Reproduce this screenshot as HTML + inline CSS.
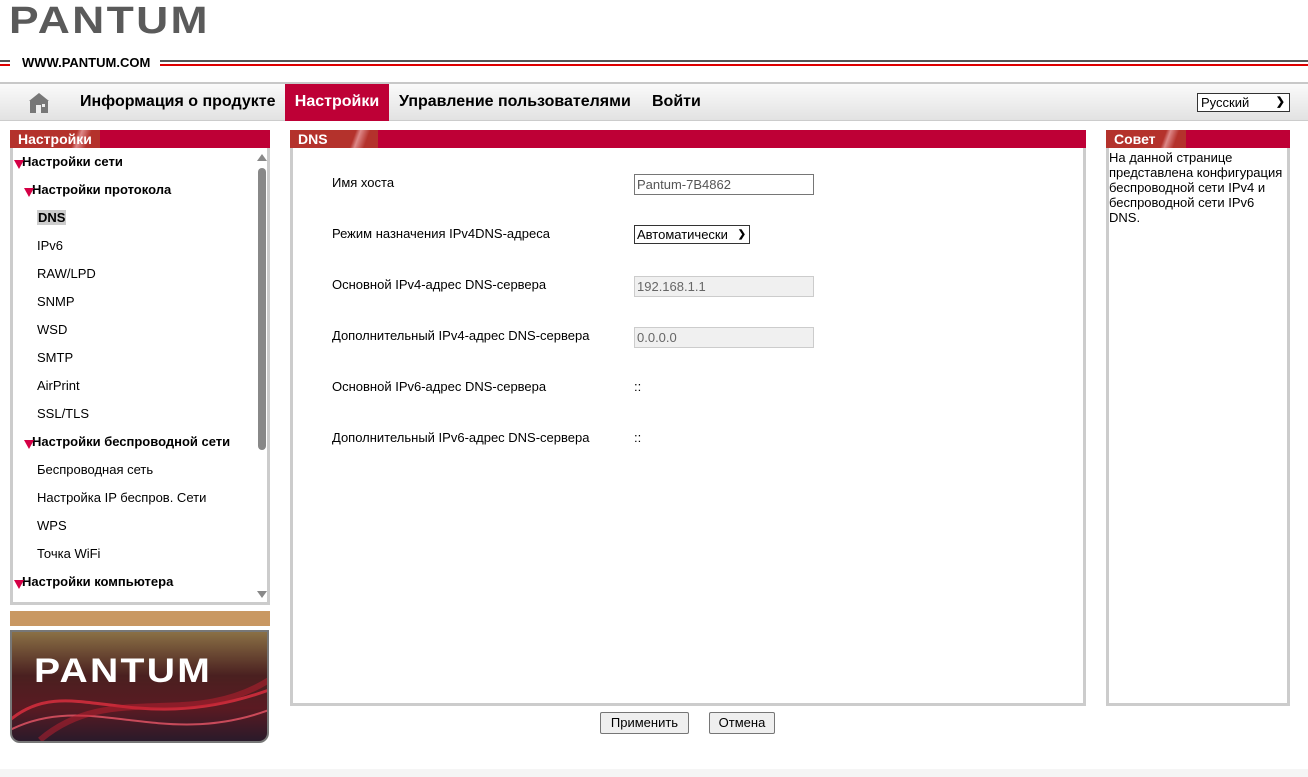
<!DOCTYPE html>
<html><head><meta charset="utf-8"><style>
*{margin:0;padding:0;box-sizing:border-box}
body{width:1308px;height:777px;background:#fff;font-family:"Liberation Sans",Arial,sans-serif;position:relative;overflow:hidden;color:#000}
.abs{position:absolute}
.logo{left:9px;top:1px;font-size:38px;font-weight:bold;color:#5a5a5a;letter-spacing:2px;transform:scaleX(1.17);transform-origin:left;line-height:40px}
.nav{left:0;top:82px;width:1308px;height:39px;border-top:2px solid #c8c8c8;background:linear-gradient(#fafafa,#e2e2e2);border-bottom:1px solid #ccc}
.nav span{position:absolute;top:0;height:37px;line-height:36px;font-size:16px;font-weight:bold}
.hdr{height:18px;background:#be0036;color:#fff;font-weight:bold;font-size:14px;line-height:18px}
.hdr i{display:inline-block;height:18px;padding:0 8px;background:linear-gradient(110deg,#b4322c 70%,#d88 75%,#b4322c 85%);font-style:normal}
.box{border:3px solid #ccc;border-top:none;background:#fff}
.tree div{position:absolute;font-size:13px;white-space:nowrap}
.tree b.t{position:absolute;width:0;height:0;border-left:5px solid transparent;border-right:5px solid transparent;border-top:9px solid #d40045}
.lbl{position:absolute;left:332px;font-size:13px}
.inp{position:absolute;left:634px;width:180px;height:21px;border:1px solid #767676;font-size:13px;color:#555;padding-left:2px;line-height:19px}
.dis{background:#f0f0f0;border-color:#ccc;color:#666}
.btn{position:absolute;top:712px;height:22px;border:1px solid #767676;border-radius:2px;background:#efefef;font-size:13px;text-align:center;line-height:20px}
</style></head><body>
<div class="abs logo">PANTUM</div>
<div class="abs" style="left:0;top:60px;width:10px;height:2px;background:#555"></div>
<div class="abs" style="left:0;top:64px;width:10px;height:2px;background:#d00"></div>
<div class="abs" style="left:160px;top:60px;width:1148px;height:2px;background:#555"></div>
<div class="abs" style="left:160px;top:64px;width:1148px;height:2px;background:#d00"></div>
<div class="abs" style="left:22px;top:55px;font-size:13px;font-weight:bold">WWW.PANTUM.COM</div>
<div class="abs nav">
<svg style="position:absolute;left:28px;top:8px" width="22" height="22" viewBox="0 0 22 22"><path d="M11 1L1 9h20z" fill="#777"/><rect x="2" y="9" width="18" height="12" fill="#777"/><rect x="8" y="13" width="5" height="8" fill="#eee"/><rect x="14" y="12" width="3" height="3" fill="#eee"/></svg>
<span style="left:80px">Информация о продукте</span>
<span style="left:285px;width:104px;background:#be0036;color:#fff;text-align:center">Настройки</span>
<span style="left:399px">Управление пользователями</span>
<span style="left:652px">Войти</span>
<div style="position:absolute;left:1197px;top:9px;width:93px;height:19px;border:1px solid #333;background:#fff;font-size:13px;line-height:17px;padding-left:3px">Русский<span style="position:absolute;left:auto;right:4px;top:0;height:17px;line-height:17px;font-size:11px">&#10095;</span></div>
</div>
<!-- left -->
<div class="abs" style="left:10px;top:130px;width:260px"><div class="hdr"><i>Настройки</i></div>
<div class="box tree" style="height:457px;position:relative">
<div style="left:9px;top:6px;font-weight:bold"><b class="t" style="left:-8px;top:6px"></b>Настройки сети</div>
<div style="left:19px;top:34px;font-weight:bold"><b class="t" style="left:-8px;top:6px"></b>Настройки протокола</div>
<div style="left:24px;top:62px;font-weight:bold;background:#ccc;padding:0 1px">DNS</div>
<div style="left:24px;top:90px">IPv6</div>
<div style="left:24px;top:118px">RAW/LPD</div>
<div style="left:24px;top:146px">SNMP</div>
<div style="left:24px;top:174px">WSD</div>
<div style="left:24px;top:202px">SMTP</div>
<div style="left:24px;top:230px">AirPrint</div>
<div style="left:24px;top:258px">SSL/TLS</div>
<div style="left:19px;top:286px;font-weight:bold"><b class="t" style="left:-8px;top:6px"></b>Настройки беспроводной сети</div>
<div style="left:24px;top:314px">Беспроводная сеть</div>
<div style="left:24px;top:342px">Настройка IP беспров. Сети</div>
<div style="left:24px;top:370px">WPS</div>
<div style="left:24px;top:398px">Точка WiFi</div>
<div style="left:9px;top:426px;font-weight:bold"><b class="t" style="left:-8px;top:6px"></b>Настройки компьютера</div>
<div style="left:244px;top:6px;width:0;height:0;border-left:5px solid transparent;border-right:5px solid transparent;border-bottom:7px solid #888"></div>
<div style="left:245px;top:20px;width:8px;height:282px;background:#888;border-radius:4px"></div>
<div style="left:244px;top:443px;width:0;height:0;border-left:5px solid transparent;border-right:5px solid transparent;border-top:7px solid #888"></div>
</div></div>
<div class="abs" style="left:10px;top:611px;width:260px;height:15px;background:#c99862"></div>
<div class="abs" style="left:10px;top:630px;width:259px;height:113px;border:2px solid #777;border-radius:0 0 10px 10px;background:linear-gradient(#8a7045,#4a2020 40%,#5a1a22 70%,#2a1a2a);overflow:hidden">
<svg width="259" height="113" style="position:absolute;left:-2px;top:-2px"><path d="M0 90 C60 40 120 110 259 60" stroke="#e03040" stroke-width="3" fill="none" opacity=".8"/><path d="M0 100 C80 60 150 120 259 80" stroke="#ff6070" stroke-width="2" fill="none" opacity=".7"/><path d="M30 110 C100 50 180 100 259 50" stroke="#c02030" stroke-width="6" fill="none" opacity=".5"/></svg>
<div style="position:absolute;left:22px;top:20px;font-size:34px;font-weight:bold;color:#fff;letter-spacing:2px;transform:scaleX(1.15);transform-origin:left">PANTUM</div>
</div>
<!-- main -->
<div class="abs" style="left:290px;top:130px;width:796px"><div class="hdr"><i style="padding-right:50px">DNS</i></div><div class="box" style="height:558px"></div></div>
<div class="lbl" style="top:175px">Имя хоста</div>
<div class="inp" style="top:174px">Pantum-7B4862</div>
<div class="lbl" style="top:226px">Режим назначения IPv4DNS-адреса</div>
<div class="inp" style="top:225px;width:116px;height:19px;line-height:17px;color:#000;border-color:#333">Автоматически<span style="position:absolute;right:3px;font-size:10px;font-weight:bold">&#10095;</span></div>
<div class="lbl" style="top:277px">Основной IPv4-адрес DNS-сервера</div>
<div class="inp dis" style="top:276px">192.168.1.1</div>
<div class="lbl" style="top:328px">Дополнительный IPv4-адрес DNS-сервера</div>
<div class="inp dis" style="top:327px">0.0.0.0</div>
<div class="lbl" style="top:379px">Основной IPv6-адрес DNS-сервера</div>
<div class="lbl" style="left:634px;top:379px">::</div>
<div class="lbl" style="top:430px">Дополнительный IPv6-адрес DNS-сервера</div>
<div class="lbl" style="left:634px;top:430px">::</div>
<div class="btn" style="left:600px;width:89px">Применить</div>
<div class="btn" style="left:709px;width:66px">Отмена</div>
<!-- advice -->
<div class="abs" style="left:1106px;top:130px;width:184px"><div class="hdr"><i style="padding-right:30px">Совет</i></div><div class="box" style="height:558px;font-size:13px;line-height:15px;padding:2px 2px 0 0">На данной странице представлена конфигурация беспроводной сети IPv4 и беспроводной сети IPv6 DNS.</div></div>
<div class="abs" style="left:0;top:769px;width:1308px;height:8px;background:#f5f5f5"></div>
</body></html>
